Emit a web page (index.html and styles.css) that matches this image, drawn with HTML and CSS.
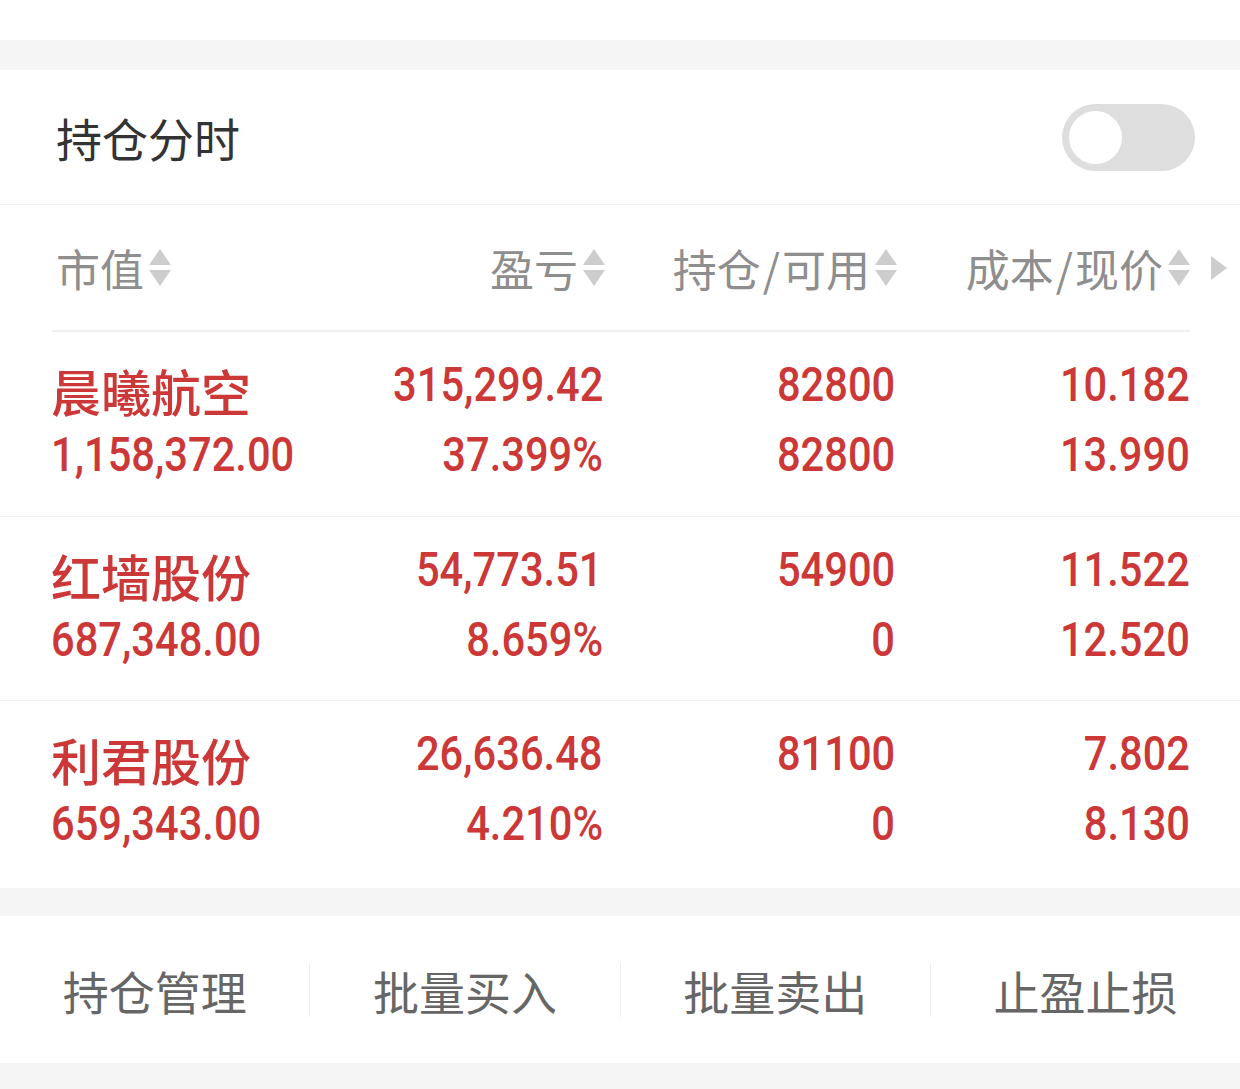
FILE: index.html
```html
<!DOCTYPE html>
<html lang="zh-CN">
<head>
    <meta charset="UTF-8">
    <meta name="viewport" content="width=device-width, initial-scale=1.0">
    <title>持仓</title>
    <link rel="stylesheet" href="styles.css">
</head>
<body>
    <div class="page">
        <div class="top-space"></div>
        <div class="gap"></div>

        <!-- 持仓分时 -->
        <div class="switch-row">
            <span class="switch-label">持仓分时</span>
            <div class="toggle"><div class="knob"></div></div>
        </div>

        <!-- Table header -->
        <div class="table-head">
            <div class="th th-left">市值<svg class="sort" viewBox="0 0 22 38"><polygon points="11,0 22,16 0,16"/><polygon points="0,21 22,21 11,37"/></svg></div>
            <div class="th">盈亏<svg class="sort" viewBox="0 0 22 38"><polygon points="11,0 22,16 0,16"/><polygon points="0,21 22,21 11,37"/></svg></div>
            <div class="th">持仓<span class="slash">/</span>可用<svg class="sort" viewBox="0 0 22 38"><polygon points="11,0 22,16 0,16"/><polygon points="0,21 22,21 11,37"/></svg></div>
            <div class="th">成本<span class="slash">/</span>现价<svg class="sort" viewBox="0 0 22 38"><polygon points="11,0 22,16 0,16"/><polygon points="0,21 22,21 11,37"/></svg></div>
            <svg class="more" viewBox="0 0 16 24"><polygon points="0,0 16,12 0,24"/></svg>
        </div>

        <!-- Positions -->
        <div class="rows">
            <div class="row">
                <div class="cell cell-left"><span class="name">晨曦航空</span><span class="num">1,158,372.00</span></div>
                <div class="cell"><span class="num">315,299.42</span><span class="num">37.399%</span></div>
                <div class="cell"><span class="num">82800</span><span class="num">82800</span></div>
                <div class="cell"><span class="num">10.182</span><span class="num">13.990</span></div>
            </div>
            <div class="row">
                <div class="cell cell-left"><span class="name">红墙股份</span><span class="num">687,348.00</span></div>
                <div class="cell"><span class="num">54,773.51</span><span class="num">8.659%</span></div>
                <div class="cell"><span class="num">54900</span><span class="num">0</span></div>
                <div class="cell"><span class="num">11.522</span><span class="num">12.520</span></div>
            </div>
            <div class="row">
                <div class="cell cell-left"><span class="name">利君股份</span><span class="num">659,343.00</span></div>
                <div class="cell"><span class="num">26,636.48</span><span class="num">4.210%</span></div>
                <div class="cell"><span class="num">81100</span><span class="num">0</span></div>
                <div class="cell"><span class="num">7.802</span><span class="num">8.130</span></div>
            </div>
        </div>

        <div class="gap gap-mid"></div>

        <!-- Actions -->
        <div class="actions">
            <div class="action">持仓管理</div>
            <div class="action">批量买入</div>
            <div class="action">批量卖出</div>
            <div class="action">止盈止损</div>
        </div>

        <div class="gap gap-bottom"></div>
    </div>
</body>
</html>
```

FILE: styles.css
```css
body {
    margin: 0;
    padding: 0;
    background-color: #fff;
    font-family: "Noto Sans CJK SC", "Noto Sans", sans-serif;
}
.page {
    width: 1240px;
    height: 1089px;
    overflow: hidden;
}
.top-space {
    height: 40px;
}
.gap {
    height: 30px;
    background-color: #f5f5f5;
}
.gap-mid {
    height: 28px;
}
.gap-bottom {
    height: 27px;
}
.switch-row {
    height: 134px;
    display: flex;
    align-items: center;
    justify-content: space-between;
    padding: 0 45px 0 56px;
    border-bottom: 1px solid #f0f0f0;
}
.switch-label {
    font-size: 46px;
    color: #333;
    line-height: 1;
}
.toggle {
    width: 133px;
    height: 67px;
    border-radius: 34px;
    background-color: #dedede;
    box-sizing: border-box;
    padding: 7px;
    display: flex;
    align-items: center;
}
.knob {
    width: 53px;
    height: 53px;
    border-radius: 50%;
    background-color: #fff;
}
.table-head {
    height: 125px;
    display: grid;
    grid-template-columns: 300px 253px 292px 293px auto;
    align-items: center;
    margin: 0 0 0 52px;
    border-bottom: 2px solid #f0f0f0;
    width: 1138px;
    box-sizing: content-box;
}
.th {
    display: flex;
    align-items: center;
    justify-content: flex-end;
    font-size: 44px;
    color: #8e8e8e;
    line-height: 1;
}
.th-left {
    justify-content: flex-start;
    padding-left: 4px;
}
.slash {
    padding: 0 2px;
}
.sort {
    width: 22px;
    height: 38px;
    margin-left: 5px;
    fill: #cdcdcd;
}
.more {
    width: 16px;
    height: 24px;
    margin-left: 21px;
    fill: #cdcdcd;
}
.rows {
    padding-bottom: 4px;
}
.row {
    height: 184px;
    box-sizing: border-box;
    padding: 18px 50px 0 51px;
    display: grid;
    grid-template-columns: 301px 251px 292px 295px;
}
.row + .row {
    border-top: 1px solid #f0f0f0;
}
.cell {
    display: flex;
    flex-direction: column;
    align-items: flex-end;
    color: #cc3838;
}
.cell-left {
    align-items: flex-start;
}
.name {
    font-size: 50px;
    line-height: 70px;
    height: 70px;
    font-weight: 500;
    padding-top: 5px;
    box-sizing: border-box;
}
.num {
    display: inline-block;
    font-family: "Roboto", sans-serif;
    font-size: 49px;
    font-weight: 500;
    line-height: 70px;
    height: 70px;
    transform: scaleX(0.85);
    transform-origin: right center;
}
.cell-left .num {
    transform-origin: left center;
}
.actions {
    height: 147px;
    display: flex;
    align-items: center;
}
.action {
    flex: 1;
    height: 54px;
    display: flex;
    align-items: center;
    justify-content: center;
    font-size: 46px;
    color: #666;
}
.action + .action {
    border-left: 1px solid #eee;
}
```
